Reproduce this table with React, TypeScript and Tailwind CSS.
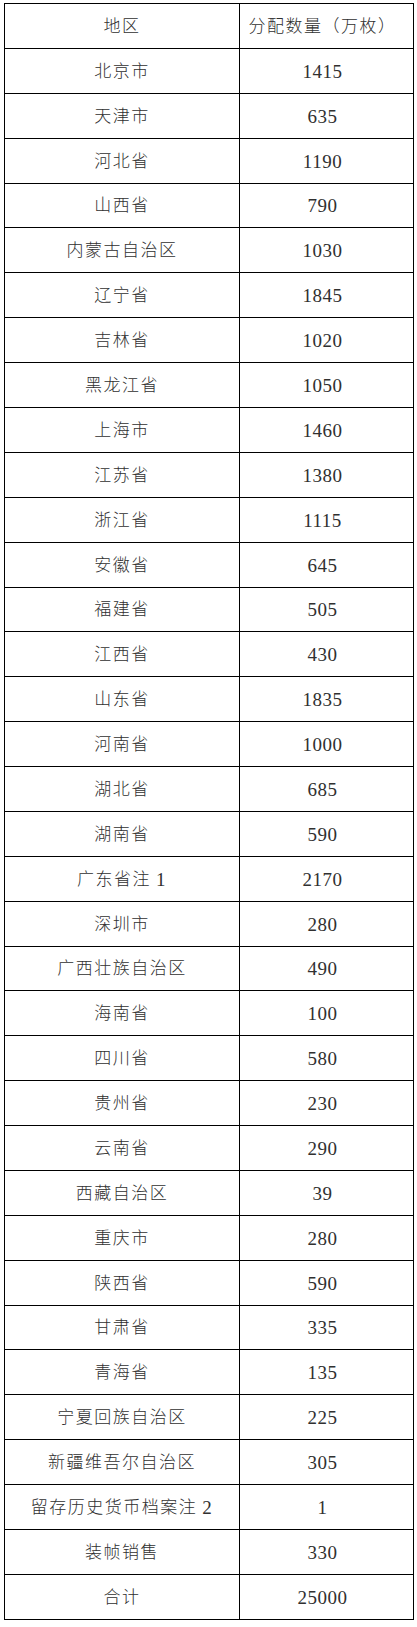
import React from 'react';

const rows: [string, string][] = [
    ['北京市', '1415'],
    ['天津市', '635'],
    ['河北省', '1190'],
    ['山西省', '790'],
    ['内蒙古自治区', '1030'],
    ['辽宁省', '1845'],
    ['吉林省', '1020'],
    ['黑龙江省', '1050'],
    ['上海市', '1460'],
    ['江苏省', '1380'],
    ['浙江省', '1115'],
    ['安徽省', '645'],
    ['福建省', '505'],
    ['江西省', '430'],
    ['山东省', '1835'],
    ['河南省', '1000'],
    ['湖北省', '685'],
    ['湖南省', '590'],
    ['广东省注1', '2170'],
    ['深圳市', '280'],
    ['广西壮族自治区', '490'],
    ['海南省', '100'],
    ['四川省', '580'],
    ['贵州省', '230'],
    ['云南省', '290'],
    ['西藏自治区', '39'],
    ['重庆市', '280'],
    ['陕西省', '590'],
    ['甘肃省', '335'],
    ['青海省', '135'],
    ['宁夏回族自治区', '225'],
    ['新疆维吾尔自治区', '305'],
    ['留存历史货币档案注2', '1'],
    ['装帧销售', '330'],
    ['合计', '25000'],
];

// The scanned table drifts a little: a handful of rows are a pixel shorter.
const shortRows = new Set([4, 13, 21, 29]);

// "注1" style footnote marks: keep the digit apart from the CJK text.
const Region = ({ name }: { name: string }) => {
    const m = name.match(/^(.*注)(\d)$/);
    if (!m) return <>{name}</>;
    return (
        <>
            {m[1]}
            <span className="ml-[5px] text-[19px]">{m[2]}</span>
        </>
    );
};

const Row = ({ left, right, idx, last, header }: { left: React.ReactNode; right: React.ReactNode; idx: number; last?: boolean; header?: boolean }) => (
    <div
        className={`grid grid-cols-[234px_1fr] ${last ? 'h-[44px]' : shortRows.has(idx) ? 'h-[44px] border-b border-black' : 'h-[45px] border-b border-black'}`}
    >
        <div className="flex items-center justify-center text-[17px] tracking-[1.5px]">{left}</div>
        <div
            className={`flex items-center justify-center border-l border-black pr-[8px] ${header ? 'text-[17px] tracking-[1.5px]' : 'text-[19px] tracking-[0.5px]'}`}
        >
            {right}
        </div>
    </div>
);

export default function App() {
    return (
        <div className="min-h-[1627px] bg-white pl-[4px] pt-[3px] text-[#303030] font-light font-['Liberation_Serif','Noto_Sans_CJK_SC',serif] leading-none">
            <div className="w-[410px] border border-black">
                <Row left="地区" right="分配数量（万枚）" idx={0} header />
                {rows.map(([name, n], i) => (
                    <Row key={name} left={<Region name={name} />} right={n} idx={i + 1} last={i === rows.length - 1} />
                ))}
            </div>
        </div>
    );
}
